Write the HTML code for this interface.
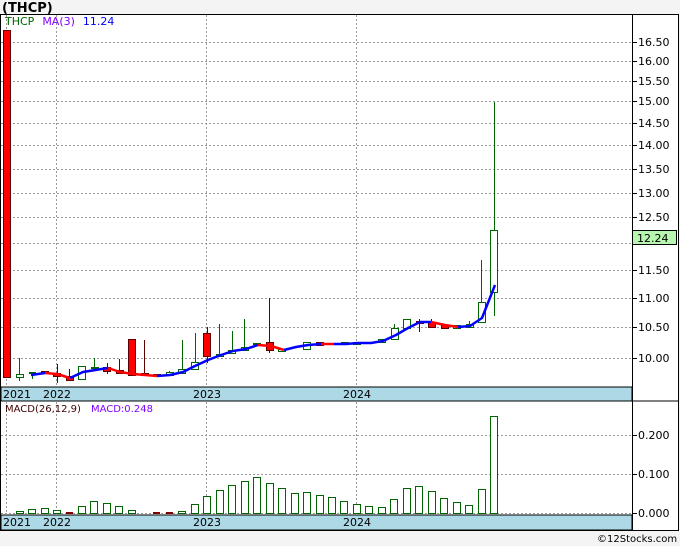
<!DOCTYPE html>
<html><head><meta charset="utf-8"><style>
body{margin:0;background:#f4f4f4;width:680px;height:546px;overflow:hidden}
svg{display:block}
text{font-family:"DejaVu Sans","Liberation Sans",sans-serif;font-size:11px}
</style></head><body>
<svg width="680" height="546" viewBox="0 0 680 546" xmlns="http://www.w3.org/2000/svg">
<rect x="0" y="0" width="680" height="546" fill="#f4f4f4"/>
<text x="2" y="12" style="font-size:13px;font-weight:bold" fill="#000">(THCP)</text>
<rect x="0.5" y="14.5" width="678" height="516" fill="#fff" stroke="#000"/>
<!-- bands -->
<rect x="1" y="387" width="631" height="14" fill="#add8e6" stroke="#000"/>
<rect x="1" y="515" width="631" height="15" fill="#add8e6" stroke="#000"/>
<line x1="632" y1="401" x2="679" y2="401" stroke="#000"/>
<line x1="632.5" y1="14" x2="632.5" y2="530" stroke="#000"/>
<g stroke="#999" stroke-dasharray="2,2" stroke-width="1">
<line x1="6.5" y1="15" x2="6.5" y2="387"/><line x1="56.5" y1="15" x2="56.5" y2="387"/><line x1="206.5" y1="15" x2="206.5" y2="387"/><line x1="356.5" y1="15" x2="356.5" y2="387"/>
<line x1="6.5" y1="402" x2="6.5" y2="515"/><line x1="56.5" y1="402" x2="56.5" y2="515"/><line x1="206.5" y1="402" x2="206.5" y2="515"/><line x1="356.5" y1="402" x2="356.5" y2="515"/>
<line x1="1" y1="42.5" x2="632" y2="42.5"/><line x1="1" y1="61.5" x2="632" y2="61.5"/><line x1="1" y1="81.5" x2="632" y2="81.5"/><line x1="1" y1="101.5" x2="632" y2="101.5"/><line x1="1" y1="123.5" x2="632" y2="123.5"/><line x1="1" y1="145.5" x2="632" y2="145.5"/><line x1="1" y1="169.5" x2="632" y2="169.5"/><line x1="1" y1="193.5" x2="632" y2="193.5"/><line x1="1" y1="217.5" x2="632" y2="217.5"/><line x1="1" y1="243.5" x2="632" y2="243.5"/><line x1="1" y1="270.5" x2="632" y2="270.5"/><line x1="1" y1="298.5" x2="632" y2="298.5"/><line x1="1" y1="327.5" x2="632" y2="327.5"/><line x1="1" y1="358.5" x2="632" y2="358.5"/>
<line x1="1" y1="435.5" x2="632" y2="435.5"/><line x1="1" y1="474.5" x2="632" y2="474.5"/><line x1="1" y1="513.5" x2="632" y2="513.5"/>
</g>
<!-- axis ticks -->
<g stroke="#000">
<line x1="632" y1="42.5" x2="637" y2="42.5"/><line x1="632" y1="61.5" x2="637" y2="61.5"/><line x1="632" y1="81.5" x2="637" y2="81.5"/><line x1="632" y1="101.5" x2="637" y2="101.5"/><line x1="632" y1="123.5" x2="637" y2="123.5"/><line x1="632" y1="145.5" x2="637" y2="145.5"/><line x1="632" y1="169.5" x2="637" y2="169.5"/><line x1="632" y1="193.5" x2="637" y2="193.5"/><line x1="632" y1="217.5" x2="637" y2="217.5"/><line x1="632" y1="243.5" x2="637" y2="243.5"/><line x1="632" y1="270.5" x2="637" y2="270.5"/><line x1="632" y1="298.5" x2="637" y2="298.5"/><line x1="632" y1="327.5" x2="637" y2="327.5"/><line x1="632" y1="358.5" x2="637" y2="358.5"/>
<line x1="632" y1="435.5" x2="637" y2="435.5"/><line x1="632" y1="474.5" x2="637" y2="474.5"/><line x1="632" y1="513.5" x2="637" y2="513.5"/>
</g>
<g fill="#000">
<text x="638" y="46">16.50</text><text x="638" y="65">16.00</text><text x="638" y="85">15.50</text><text x="638" y="105">15.00</text><text x="638" y="127">14.50</text><text x="638" y="149">14.00</text><text x="638" y="173">13.50</text><text x="638" y="197">13.00</text><text x="638" y="221">12.50</text><text x="638" y="274">11.50</text><text x="638" y="302">11.00</text><text x="638" y="331">10.50</text><text x="638" y="362">10.00</text>
<text x="638" y="439">0.200</text><text x="638" y="478">0.100</text><text x="638" y="517">0.000</text>
</g>
<rect x="632.5" y="230.5" width="44" height="14" fill="#b8f5b0" stroke="#000"/>
<text x="637" y="242" fill="#000">12.24</text>
<g fill="#000">
<text x="3" y="398">2021</text><text x="43" y="398">2022</text><text x="193" y="398">2023</text><text x="343" y="398">2024</text>
<text x="3" y="526">2021</text><text x="43" y="526">2022</text><text x="193" y="526">2023</text><text x="343" y="526">2024</text>
</g>
<text x="5" y="25"><tspan fill="#006400">THCP</tspan><tspan fill="#8000ff" dx="8">MA(3)</tspan><tspan fill="#0000ff" dx="8">11.24</tspan></text>
<text x="5" y="412" style="font-size:10px"><tspan fill="#400000">MACD(26,12,9)</tspan><tspan fill="#8000ff" dx="10">MACD:0.248</tspan></text>
<!-- wicks -->
<g stroke-width="1">
<g stroke="#006400">
<line x1="19.5" y1="358" x2="19.5" y2="381"/><line x1="32.5" y1="372" x2="32.5" y2="379"/><line x1="94.5" y1="358" x2="94.5" y2="369"/><line x1="169.5" y1="371" x2="169.5" y2="376"/><line x1="182.5" y1="340" x2="182.5" y2="373"/><line x1="195.5" y1="333" x2="195.5" y2="369"/><line x1="219.5" y1="324" x2="219.5" y2="356"/><line x1="232.5" y1="331" x2="232.5" y2="353"/><line x1="244.5" y1="319" x2="244.5" y2="350"/><line x1="394.5" y1="324" x2="394.5" y2="339"/><line x1="469.5" y1="321" x2="469.5" y2="327"/><line x1="481.5" y1="260" x2="481.5" y2="322"/><line x1="494.5" y1="102" x2="494.5" y2="316"/>
</g>
<g stroke="#600000">
<line x1="57.5" y1="364" x2="57.5" y2="383"/><line x1="69.5" y1="369" x2="69.5" y2="381"/><line x1="107.5" y1="363" x2="107.5" y2="374"/><line x1="119.5" y1="359" x2="119.5" y2="373"/><line x1="144.5" y1="340" x2="144.5" y2="376"/><line x1="207.5" y1="327" x2="207.5" y2="363"/><line x1="269.5" y1="298" x2="269.5" y2="353"/><line x1="419.5" y1="319" x2="419.5" y2="332"/><line x1="431.5" y1="319" x2="431.5" y2="327"/>
</g>
</g>
<!-- red bodies -->
<g fill="#ff0000" stroke="#600000">
<rect x="3.5" y="30.5" width="7" height="347"/>
<rect x="41.5" y="371.5" width="7" height="2"/><rect x="53.5" y="373.5" width="7" height="3"/><rect x="66.5" y="376.5" width="7" height="4"/><rect x="103.5" y="367.5" width="7" height="4"/><rect x="116.5" y="370.5" width="7" height="3"/><rect x="128.5" y="339.5" width="7" height="36"/><rect x="141.5" y="373.5" width="7" height="2"/><rect x="153.5" y="374.5" width="7" height="1"/><rect x="203.5" y="333.5" width="7" height="23"/><rect x="266.5" y="342.5" width="7" height="8"/><rect x="316.5" y="342.5" width="7" height="3"/><rect x="416.5" y="321.5" width="7" height="2"/><rect x="428.5" y="322.5" width="7" height="5"/><rect x="441.5" y="325.5" width="7" height="3"/>
</g>
<!-- green bodies -->
<g fill="#fff" stroke="#006400">
<rect x="16.5" y="374.5" width="7" height="3"/><rect x="29.5" y="372.5" width="6" height="1"/><rect x="78.5" y="366.5" width="7" height="13"/><rect x="91.5" y="367.5" width="7" height="1"/><rect x="166.5" y="372.5" width="7" height="3"/><rect x="178.5" y="369.5" width="7" height="4"/><rect x="191.5" y="362.5" width="7" height="7"/><rect x="216.5" y="354.5" width="7" height="2"/><rect x="228.5" y="350.5" width="7" height="3"/><rect x="241.5" y="347.5" width="7" height="3"/><rect x="253.5" y="343.5" width="7" height="1"/><rect x="278.5" y="349.5" width="7" height="2"/><rect x="303.5" y="342.5" width="7" height="7"/><rect x="341.5" y="342.5" width="7" height="1"/><rect x="353.5" y="342.5" width="7" height="2"/><rect x="378.5" y="339.5" width="7" height="3"/><rect x="391.5" y="328.5" width="7" height="11"/><rect x="403.5" y="319.5" width="7" height="9"/><rect x="453.5" y="325.5" width="7" height="3"/><rect x="466.5" y="324.5" width="7" height="3"/><rect x="478.5" y="302.5" width="7" height="20"/><rect x="490.5" y="230.5" width="7" height="62"/>
</g>
<!-- MA line -->
<g fill="none" stroke-width="2.5" stroke-linejoin="round">
<polyline stroke="#0000ff" points="31,375 45,373"/>
<polyline stroke="#ff0000" points="45,373 57,374 70,378"/>
<polyline stroke="#0000ff" points="70,378 83,372 108,368"/>
<polyline stroke="#ff0000" points="108,368 120,372 133,374 145,375 157,376"/>
<polyline stroke="#0000ff" points="157,376 170,375 183,372 195,366 208,360 221,355 233,351 246,349 258,345"/>
<polyline stroke="#ff0000" points="258,345 271,346 284,350"/>
<polyline stroke="#0000ff" points="284,350 296,347 308,345 321,344"/>
<polyline stroke="#ff0000" points="321,344 334,344"/>
<polyline stroke="#0000ff" points="334,344 346,344 358,343 371,343 383,341 396,335 408,328 420,322 431,322"/>
<polyline stroke="#ff0000" points="431,322 445,325 458,327"/>
<polyline stroke="#0000ff" points="458,327 470,326 482,318 495,285"/>
</g>
<!-- MACD bars -->
<g fill="#fff" stroke="#006400">
<rect x="16.5" y="511.5" width="7" height="2"/><rect x="28.5" y="509.5" width="7" height="4"/><rect x="41.5" y="508.5" width="7" height="5"/><rect x="53.5" y="510.5" width="7" height="3"/><rect x="78.5" y="506.5" width="7" height="7"/><rect x="90.5" y="501.5" width="7" height="12"/><rect x="103.5" y="503.5" width="7" height="10"/><rect x="115.5" y="506.5" width="7" height="7"/><rect x="128.5" y="510.5" width="7" height="3"/><rect x="178.5" y="511.5" width="7" height="2"/><rect x="191.5" y="504.5" width="7" height="9"/><rect x="203.5" y="496.5" width="7" height="17"/><rect x="216.5" y="490.5" width="7" height="23"/><rect x="228.5" y="485.5" width="7" height="28"/><rect x="241.5" y="481.5" width="7" height="32"/><rect x="253.5" y="477.5" width="7" height="36"/><rect x="266.5" y="483.5" width="7" height="30"/><rect x="278.5" y="488.5" width="7" height="25"/><rect x="291.5" y="493.5" width="7" height="20"/><rect x="303.5" y="492.5" width="7" height="21"/><rect x="316.5" y="495.5" width="7" height="18"/><rect x="328.5" y="497.5" width="7" height="16"/><rect x="340.5" y="501.5" width="7" height="12"/><rect x="353.5" y="504.5" width="7" height="9"/><rect x="365.5" y="506.5" width="7" height="7"/><rect x="378.5" y="507.5" width="7" height="6"/><rect x="390.5" y="499.5" width="7" height="14"/><rect x="403.5" y="488.5" width="7" height="25"/><rect x="415.5" y="486.5" width="7" height="27"/><rect x="428.5" y="491.5" width="7" height="22"/><rect x="440.5" y="498.5" width="7" height="15"/><rect x="453.5" y="502.5" width="7" height="11"/><rect x="465.5" y="505.5" width="7" height="8"/><rect x="478.5" y="489.5" width="7" height="24"/><rect x="490.5" y="416.5" width="7" height="97"/>
</g>
<g fill="#800000"><rect x="66" y="512" width="7" height="2"/><rect x="153" y="512" width="7" height="2"/><rect x="166" y="512" width="7" height="2"/></g>
<text x="597" y="542" fill="#000" style="font-size:10px">©12Stocks.com</text>
</svg>
</body></html>
